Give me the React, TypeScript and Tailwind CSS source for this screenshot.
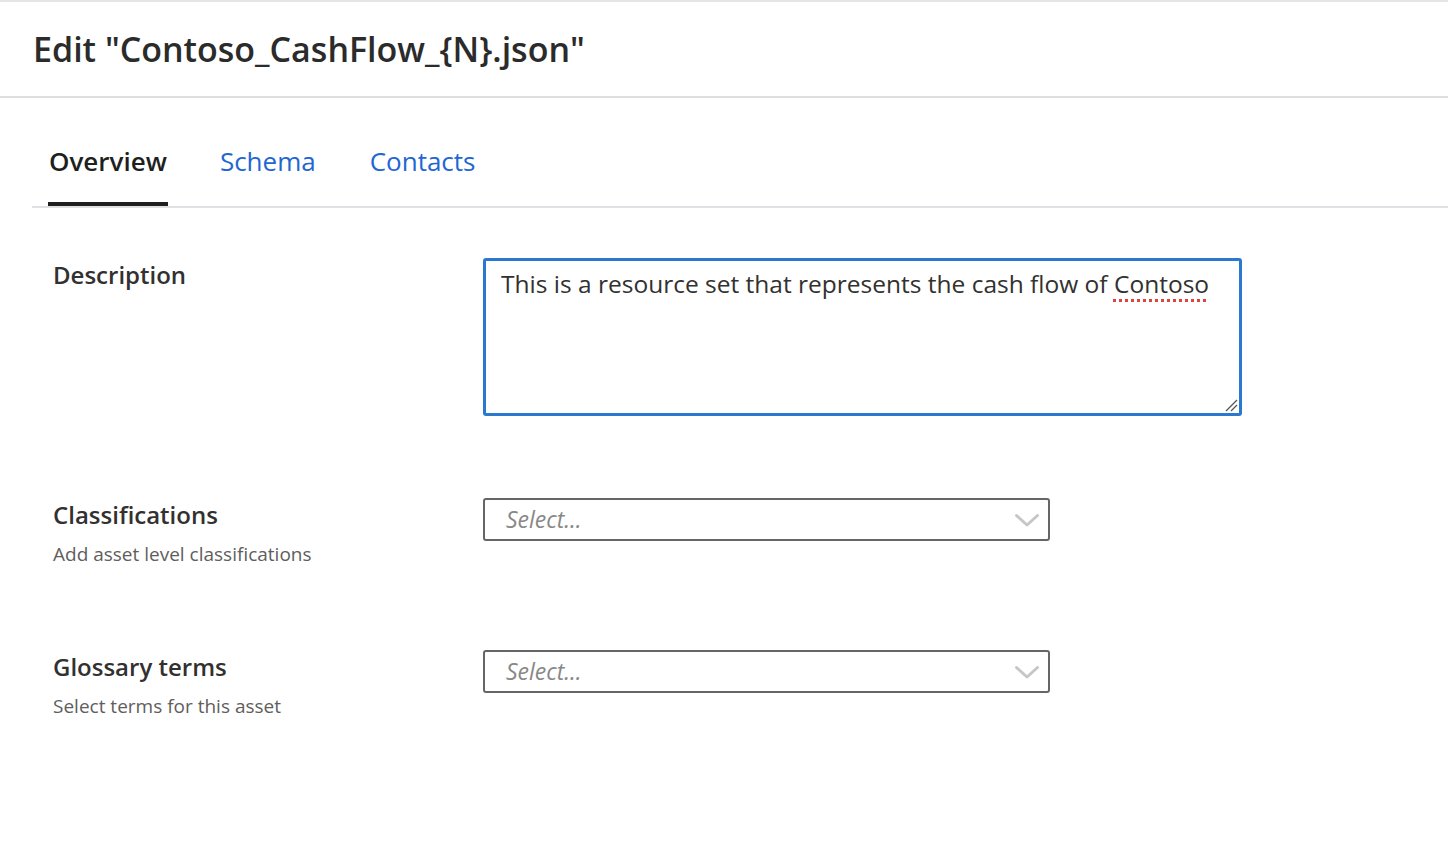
const font = { fontFamily: '"Open Sans", "Noto Sans", sans-serif' };

function SelectBox() {
  return (
    <div className="flex h-[43px] w-[567px] items-center justify-between rounded-[3px] border-2 border-[#666666] pl-[21px] pr-[8px]">
      <span className="text-[23px] italic text-[#8a8886]">Select...</span>
      <svg width="26" height="16" viewBox="0 0 26 16" fill="none">
        <path d="M2.5 3.5 L13 13 L23.5 3.5" stroke="#c8c6c4" strokeWidth="3" strokeLinecap="round" strokeLinejoin="round" />
      </svg>
    </div>
  );
}

function FieldLabel({ title, sub }: { title: string; sub?: string }) {
  return (
    <div className="w-[483px] shrink-0 pl-[53px]">
      <p className="text-[24px] font-semibold leading-[34px] text-[#323130]">{title}</p>
      {sub && <p className="mt-[10px] text-[19px] leading-[24px] text-[#605e5c]">{sub}</p>}
    </div>
  );
}

export default function App() {
  return (
    <div className="min-h-[868px] w-[1448px] bg-white" style={font}>
      <div className="h-[2px] bg-[#e5e5e5]" />
      <header className="flex h-[96px] items-center border-b-2 border-[#e1dfdd] pl-[33px]">
        <h1 className="text-[34px] font-semibold text-[#2b2b2b]">Edit "Contoso_CashFlow_{'{'}N{'}'}.json"</h1>
      </header>

      <nav className="ml-[32px] mt-[22px] flex border-b-2 border-[#dfe1e5]">
        <div className="ml-[16px] flex flex-col">
          <span className="px-[1px] pb-[23px] pt-[23px] text-[26px] font-semibold leading-[36px] text-[#201f1e]">Overview</span>
          <div className="h-[4px] bg-[#201f1e]" />
        </div>
        <span className="ml-[52px] pt-[23px] text-[26px] leading-[36px] text-[#2266d4]">Schema</span>
        <span className="ml-[54px] pt-[23px] text-[26px] leading-[36px] text-[#2266d4]">Contacts</span>
      </nav>

      <section className="mt-[50px] flex">
        <FieldLabel title="Description" />
        <div className="relative h-[158px] w-[759px] rounded-[3px] border-[3px] border-[#2b78d0] px-[15px] pt-[6px]">
          <p className="text-[24.5px] leading-[34px] text-[#323130]">
            This is a resource set that represents the cash flow of{' '}
            <span className="underline decoration-dotted decoration-[#e0443e] decoration-[3px] underline-offset-[6px]">Contoso</span>
          </p>
          <svg className="absolute bottom-[1px] right-[1px]" width="14" height="14" viewBox="0 0 14 14">
            <path d="M13 2 L2 13 M13 7 L7 13" stroke="#555" strokeWidth="1.3" />
          </svg>
        </div>
      </section>

      <section className="mt-[82px] flex">
        <FieldLabel title="Classifications" sub="Add asset level classifications" />
        <SelectBox />
      </section>

      <section className="mt-[84px] flex">
        <FieldLabel title="Glossary terms" sub="Select terms for this asset" />
        <SelectBox />
      </section>
    </div>
  );
}
